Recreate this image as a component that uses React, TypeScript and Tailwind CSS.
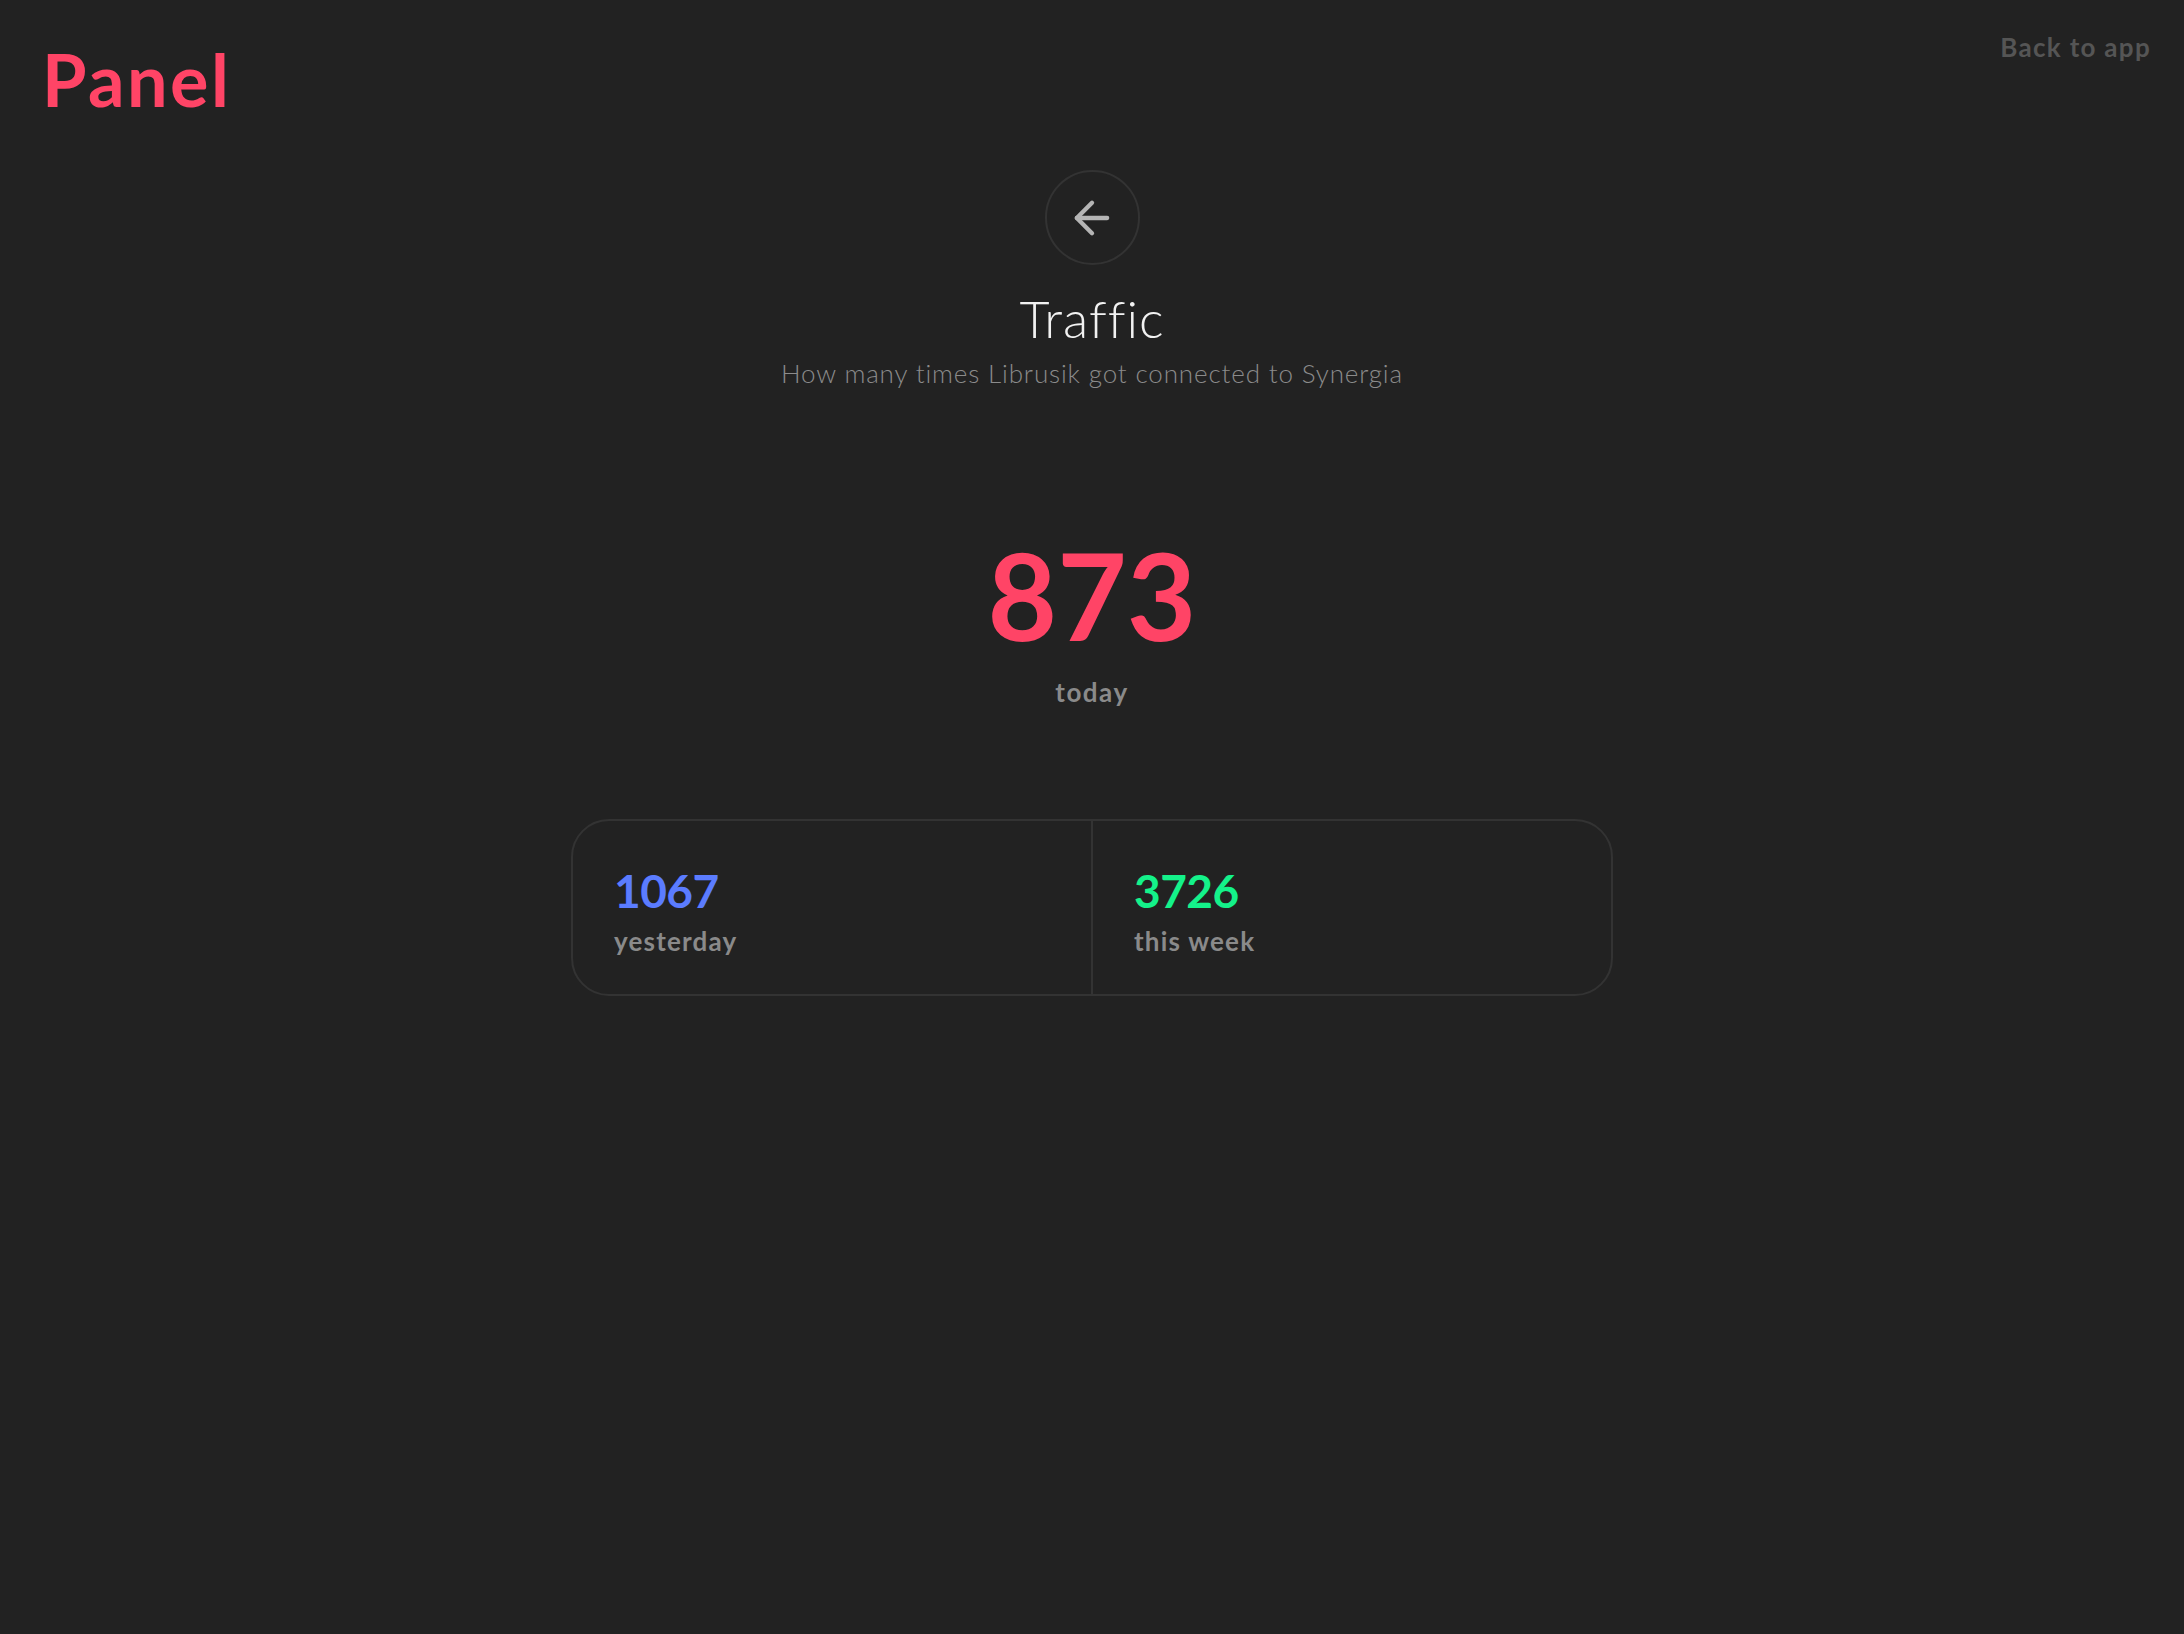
import { ArrowLeft } from "lucide-react";

const font = { fontFamily: "Lato, 'Noto Sans', sans-serif" };

function Stat({ value, label, color }: { value: string; label: string; color: string }) {
  return (
    <div className="flex flex-1 flex-col pl-[41px] pt-[47px] pb-[40px]">
      <span className={`text-[46px] font-bold leading-none tracking-[-0.5px] ${color}`}>{value}</span>
      <span className="mt-[14px] text-[26px] font-bold leading-none tracking-[1.2px] text-[#8a8a8a]">
        {label}
      </span>
    </div>
  );
}

export default function App() {
  return (
    <div className="min-h-screen bg-[#222222] text-white" style={font}>
      <header className="flex items-start justify-between pl-[42px] pr-[33px] pt-[34px]">
        <h1 className="mt-[9px] text-[72px] font-bold leading-none tracking-[2.5px] text-[#ff4466]">
          Panel
        </h1>
        <a href="#" className="text-[26px] font-bold leading-none tracking-[1.3px] text-[#555555]">
          Back to app
        </a>
      </header>

      <main className="flex flex-col items-center">
        <button className="mt-[55px] flex h-[95px] w-[95px] items-center justify-center rounded-full border-2 border-[#333333] text-[#b5b5b5]">
          <ArrowLeft size={52} strokeWidth={2} />
        </button>

        <h2 className="mt-[27px] text-[52px] font-light leading-none tracking-[1px] text-[#f2f2f2]">
          Traffic
        </h2>
        <p className="mt-[16px] text-[26px] font-light leading-none tracking-[0.85px] text-[#8b8b8b]">
          How many times Librusik got connected to Synergia
        </p>

        <div className="mt-[149px] text-[120px] font-bold leading-none text-[#ff4466]">873</div>
        <div className="mt-[24px] text-[26px] font-bold leading-none tracking-[1.5px] text-[#8a8a8a]">
          today
        </div>

        <div className="mt-[114px] flex w-[1042px] rounded-[38px] border-2 border-[#333333]">
          <Stat value="1067" label="yesterday" color="text-[#5b7cff]" />
          <div className="w-[2px] bg-[#333333]" />
          <Stat value="3726" label="this week" color="text-[#14f28a]" />
        </div>
      </main>
    </div>
  );
}
